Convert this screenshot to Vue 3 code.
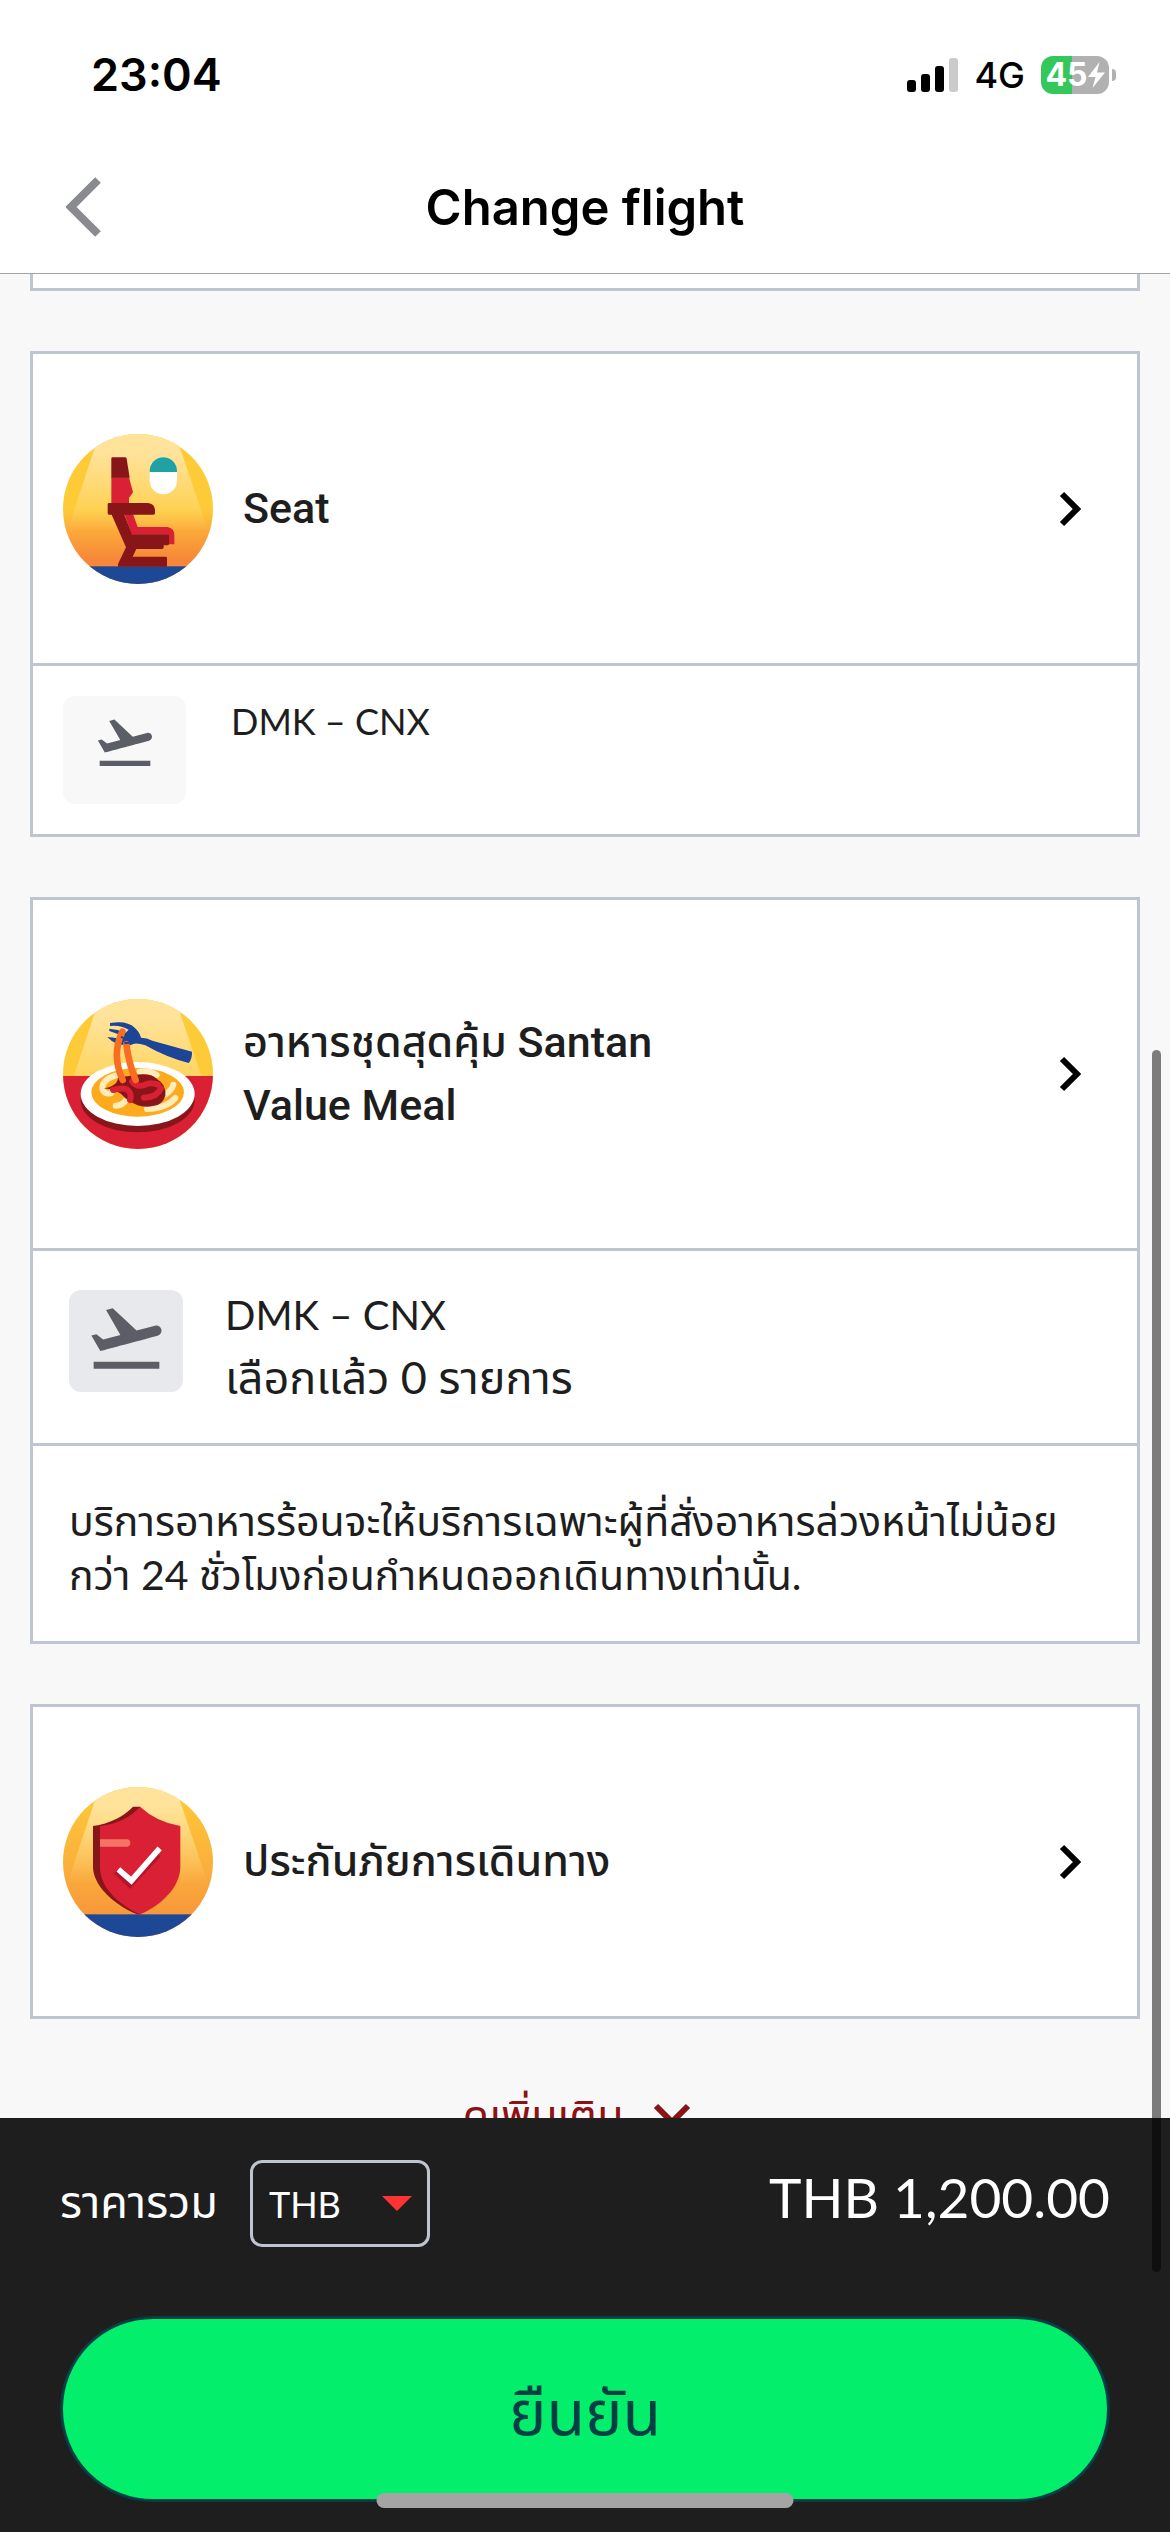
<template>
  <div class="screen">
    <header class="topbar">
      <div class="status">
        <time class="clock">23:04</time>
        <div class="status-right">
          <svg class="signal" viewBox="0 0 51 34" aria-hidden="true">
            <rect x="0" y="22" width="9" height="12" rx="3" />
            <rect x="14" y="16" width="9" height="18" rx="3" />
            <rect x="28" y="8" width="9" height="26" rx="3" />
            <rect x="42" y="0" width="9" height="34" rx="3" fill="#cbcbcb" />
          </svg>
          <span class="network">4G</span>
          <div class="battery">
            <span>45</span>
            <svg viewBox="0 0 17 26" aria-hidden="true">
              <path d="M11.500 0 0 15h7.500L4.500 26 17 10.500H9z" fill="#fff" />
            </svg>
          </div>
        </div>
      </div>
      <div class="nav">
        <button class="back" type="button" aria-label="Back">
          <svg viewBox="0 0 36 60" aria-hidden="true">
            <path d="M32 3 5 30l27 27" fill="none" stroke="#8a8b8f" stroke-width="8" />
          </svg>
        </button>
        <h1>Change flight</h1>
      </div>
    </header>

    <main class="content">
      <div class="card card-end"></div>

      <section v-for="item in items" :key="item.id" class="card">
        <button class="card-head" :class="{ tall: item.tall }" type="button">
          <svg class="pic" viewBox="0 0 450 450" aria-hidden="true">
            <defs>
              <clipPath :id="'clip-' + item.id"><circle cx="225" cy="225" r="225" /></clipPath>
              <linearGradient :id="'bg-' + item.id" x1="0" y1="0" x2="0" y2="1">
                <stop offset="0" stop-color="#fecb38" />
                <stop offset=".5" :stop-color="item.mid" />
                <stop offset=".66" :stop-color="item.low" />
                <stop offset=".84" :stop-color="item.end" />
              </linearGradient>
              <linearGradient :id="'cone-' + item.id" x1="0" y1="0" x2="0" y2="1">
                <stop offset=".2" stop-color="#ffe39b" />
                <stop offset="1" stop-color="#ffe39b" :stop-opacity="item.fade" />
              </linearGradient>
            </defs>
            <g :clip-path="`url(#clip-${item.id})`">
              <rect width="450" height="450" :fill="`url(#bg-${item.id})`" />
              <path d="M109 0h228l98 290H13z" :fill="`url(#cone-${item.id})`" />

              <g v-if="item.id === 'seat'">
                <rect y="397" width="450" height="53" fill="#1d4896" />
                <rect x="260" y="70" width="82" height="111" rx="41" fill="#fff" />
                <path d="M260 114v-3a41 41 0 0 1 82 0v3z" fill="#1fa2a3" />
                <path d="M145 130h53l12 45-12 17v16h-53z" fill="#da2035" />
                <path d="M149 70h38q3 0 4 4l9 57h-55V74q0-4 4-4z" fill="#881518" />
                <path d="M184 240h26l14 39h89q21 3 21 24v28h-17v-30H206z" fill="#da2035" />
                <path d="M138 207h117q20 2 21 22v9q0 4-4 4h-88l23 59h111v28q0 5-5 5h-11v6q0 5-5 5h-77l-11 23h99q4 0 4 4v26H165v-8l24-50-43-98h-8q-4 0-4-4v-27q0-4 4-4z" fill="#881518" />
              </g>

              <g v-else-if="item.id === 'meal'">
                <rect y="231" width="450" height="219" fill="#da2034" />
                <ellipse cx="224" cy="304" rx="171" ry="96" fill="#881518" />
                <ellipse cx="224" cy="285" rx="171" ry="96" fill="#fff" />
                <ellipse cx="224" cy="280" rx="139" ry="73" fill="#fdaa1c" />
                <g fill="none" stroke="#ffecba" stroke-width="18" stroke-linecap="round">
                  <path d="M157 230q-37 11-39 36 1 20 26 17" />
                  <path d="M158 320q22 0 31-18" />
                  <path d="M331 257q-3 16-24 29" />
                  <path d="M252 330q59-2 85-33" />
                  <path d="M230 218q31-4 51 10" />
                </g>
                <path d="M122 268q42-7 43-32l50-8q46-8 66 11 30 18 26 51-9 29-37 31-40 10-83-23-17-26-65-30z" fill="#881518" />
                <g fill="none" stroke="#da2034" stroke-width="18" stroke-linecap="round">
                  <path d="M150 273q41-12 50 7 6 11 1 23" />
                  <path d="M207 247q14 20 39 10 17-8 39 0" />
                  <path d="M243 296q39-1 51-28" />
                </g>
                <g fill="#1c4497">
                  <path d="M141 72q51-9 74 14 15 13 19 30 18 0 34 9l119 33q1 22-10 34-65-16-130-53-31-11-43-1-45 5-71-24 21 1 42 7l9-9q-23-8-45-16v-7q25 1 49 12l9-9q-24-14-56-11z" />
                </g>
                <g fill="none" stroke="#f96d22" stroke-width="20" stroke-linecap="round">
                  <path d="M178 98c-24 49-21 96 1 145" />
                  <path d="M190 136q7 57 28 107" />
                </g>
                <path d="M174 113q9 9 26 7M184 131q9 4 22-4" fill="none" stroke="#1c4497" stroke-width="6" />
              </g>

              <g v-else>
                <rect y="382" width="450" height="68" fill="#1d4896" />
                <path d="M210 59h22v323h-10C146 349 90 292 90 239V117q76-12 120-58z" fill="#881518" />
                <path d="M231 59q50 46 121 58v122c0 62-59 117-121 143-66-31-120-80-120-143V117q78-10 120-58z" fill="#da2035" />
                <path d="M111 157h80a11 11 0 0 1 0 22h-80z" fill="#f57463" />
                <path d="m158 253 43 41 86-91" fill="none" stroke="#b3162c" stroke-width="17" />
                <path d="m166 247 39 34 85-97" fill="none" stroke="#fff" stroke-width="17" />
              </g>
            </g>
          </svg>
          <span class="title">{{ item.title }}</span>
          <svg class="chevron" viewBox="0 0 22 36" aria-hidden="true">
            <path d="m3 3 15 15L3 33" fill="none" stroke="#000" stroke-width="6" />
          </svg>
        </button>

        <div v-if="item.route" class="leg" :class="{ large: item.picked }">
          <div class="badge">
            <svg viewBox="0 0 24 24" aria-hidden="true">
              <path :d="takeoff" fill="#5b5e66" />
            </svg>
          </div>
          <div class="leg-text">
            <div>{{ item.route }}</div>
            <div v-if="item.picked" class="picked">{{ item.picked }}</div>
          </div>
        </div>

        <p v-if="item.note" class="note">{{ item.note }}</p>
      </section>

      <button class="more" type="button">
        ดูเพิ่มเติม
        <svg viewBox="0 0 38 24" aria-hidden="true">
          <path d="m3 3 16 16L35 3" fill="none" stroke="#8c1216" stroke-width="6" />
        </svg>
      </button>
    </main>

    <footer class="footer">
      <div class="total">
        <label for="currency">ราคารวม</label>
        <div class="select">
          <select id="currency" v-model="currency">
            <option>THB</option>
            <option>USD</option>
          </select>
          <svg viewBox="0 0 30 15" aria-hidden="true"><path d="M0 0h30L15 15z" fill="#ff3333" /></svg>
        </div>
        <output class="price">{{ currency }} 1,200.00</output>
      </div>
      <button class="confirm" type="button">ยืนยัน</button>
    </footer>

    <div class="scrollbar"></div>
    <div class="home"></div>
  </div>
</template>

<script setup>
import { ref } from 'vue'

const currency = ref('THB')

const takeoff =
  'M2.5 19h19v2h-19v-2zm19.570-9.360c-.21-.8-1.040-1.280-1.840-1.060L14.920 10l-6.900-6.430-1.930.51 4.140 7.170-4.970 1.330-1.970-1.540-1.450.39 2.590 4.490s7.120-1.900 16.570-4.430c.81-.23 1.280-1.050 1.070-1.850z'

const items = [
  {
    id: 'seat',
    title: 'Seat',
    route: 'DMK – CNX',
    mid: '#fecb38', low: '#fba73b', end: '#f68738', fade: 0,
  },
  {
    id: 'meal',
    title: 'อาหารชุดสุดคุ้ม Santan Value Meal',
    tall: true,
    route: 'DMK – CNX',
    picked: 'เลือกแล้ว 0 รายการ',
    note: 'บริการอาหารร้อนจะให้บริการเฉพาะผู้ที่สั่งอาหารล่วงหน้าไม่น้อยกว่า 24 ชั่วโมงก่อนกำหนดออกเดินทางเท่านั้น.',
    mid: '#fecb38', low: '#fecb38', end: '#fecb38', fade: 0.2,
  },
  {
    id: 'insurance',
    title: 'ประกันภัยการเดินทาง',
    mid: '#fbb13b', low: '#f9a63b', end: '#f8983a', fade: 0,
  },
]
</script>

<style>
body { background: #f8f8f8; }
</style>

<style scoped>
* { box-sizing: border-box; }

.screen {
  position: relative;
  display: flex; flex-direction: column;
  height: 100vh;
  overflow: hidden;
  background: #f8f8f8;
  color: #1e1e1e;
  font-family: Lato, "Noto Sans Thai", "Noto Sans", sans-serif;
}
button { border: 0; padding: 0; background: none; color: inherit; font: inherit; cursor: pointer; }
svg { display: block; flex: none; }

/* top */
.topbar {
  flex: none;
  background: #fff; color: #000;
  border-bottom: 1px solid #a3a4a7;
  font-family: Inter, sans-serif;
}
.status {
  display: flex; align-items: center; justify-content: space-between;
  height: 141px;
  padding: 8px 54px 0 91px;
}
.clock { font-size: 45px; font-weight: 600; }
.status-right { display: flex; align-items: center; }
.signal { width: 51px; height: 34px; }
.network { margin: 0 16px; font-size: 36px; font-weight: 500; }
.battery {
  position: relative;
  display: flex; align-items: center; justify-content: center;
  width: 68px; height: 38px;
  margin-right: 7px;
  border-radius: 12px;
  background: linear-gradient(to right, #34c759 46%, #b1b1b1 46%);
  color: #fff; font-size: 32px; font-weight: 700;
}
.battery svg { width: 17px; height: 26px; }
.battery::after {
  content: "";
  position: absolute; left: 71px; top: 13px;
  width: 4px; height: 12px;
  border-radius: 0 4px 4px 0;
  background: #b1b1b1;
}
.nav {
  display: grid; grid-template-columns: 102px 1fr 102px; align-items: center;
  height: 132px;
}
.back { padding-left: 66px; }
.back svg { width: 36px; height: 60px; }
.nav h1 { margin: 0; text-align: center; font-size: 49px; font-weight: 600; }

/* cards */
.content {
  flex: 1; min-height: 0;
  display: flex; flex-direction: column; gap: 60px;
  padding: 0 30px;
  overflow: hidden;
}
.card { flex: none; background: #fff; border: 3px solid #bfc5d0; }
.card-end { height: 17px; border-top: 0; }
.card-head {
  display: flex; align-items: center; gap: 30px;
  width: 100%; min-height: 309px;
  padding: 0 56px 0 30px;
  text-align: left;
}
.card-head.tall { min-height: 348px; }
.pic { width: 150px; height: 150px; }
.title {
  max-width: 480px;
  font: 500 43px/63px Roboto, "Noto Sans Thai", "Noto Sans", sans-serif;
}
.chevron { width: 22px; height: 36px; margin-left: auto; }

.leg {
  display: flex; gap: 45px;
  padding: 30px;
  border-top: 3px solid #bfc5d0;
  font-size: 36px; line-height: 50px;
}
.badge {
  display: flex; justify-content: center;
  width: 123px; height: 108px;
  padding-top: 14px;
  border-radius: 12px;
  background: #f8f8f8;
}
.badge svg { width: 64px; height: 64px; }
.leg.large { gap: 42px; padding: 33px 36px; font-size: 40px; line-height: 63px; }
.large .badge { width: 114px; height: 102px; margin-top: 6px; padding-top: 6px; background: #e8e9ed; }
.large .badge svg { width: 83px; height: 83px; }
.picked { font-size: 45px; line-height: 60px; }
.note {
  margin: 0;
  padding: 48px 36px 39px;
  border-top: 3px solid #bfc5d0;
  font-size: 41px; line-height: 54px;
}
.large { min-height: 195px; }
.more {
  flex: none;
  display: flex; align-items: center; justify-content: center; gap: 30px;
  padding: 4px 16px 0 0;
  color: #8c1216;
  font-size: 43px; line-height: 63px;
}
.more svg { width: 38px; height: 24px; }

/* bottom */
.footer { flex: none; padding: 42px 60px 30px; background: #1e1e1e; color: #fff; }
.total { display: flex; align-items: center; height: 87px; }
.total label { font-size: 45px; }
.select { position: relative; margin-left: 32px; }
.select select {
  appearance: none;
  width: 180px; height: 87px;
  padding: 0 16px;
  border: 3px solid #bfc5d0; border-radius: 12px;
  background: transparent; color: #fff;
  font: 36px Lato, sans-serif;
}
.select svg { position: absolute; right: 18px; top: 36px; width: 30px; height: 15px; pointer-events: none; }
.price { margin-left: auto; padding-bottom: 14px; font-size: 55px; }
.confirm {
  display: block;
  width: 100%; height: 186px;
  margin-top: 69px;
  padding-top: 12px;
  border: 3px solid #033f45; border-radius: 93px;
  background: #03ee6b; color: #033f45;
  font-size: 63px;
}

/* overlays */
.scrollbar {
  position: absolute; right: 9px; top: 1050px;
  width: 9px; height: 1222px;
  border-radius: 5px;
  background: rgba(0, 0, 0, .5);
}
.home {
  position: absolute; left: 50%; bottom: 24px;
  width: 417px; height: 15px;
  transform: translateX(-50%);
  border-radius: 8px;
  background: #a4a4a4;
}
</style>
